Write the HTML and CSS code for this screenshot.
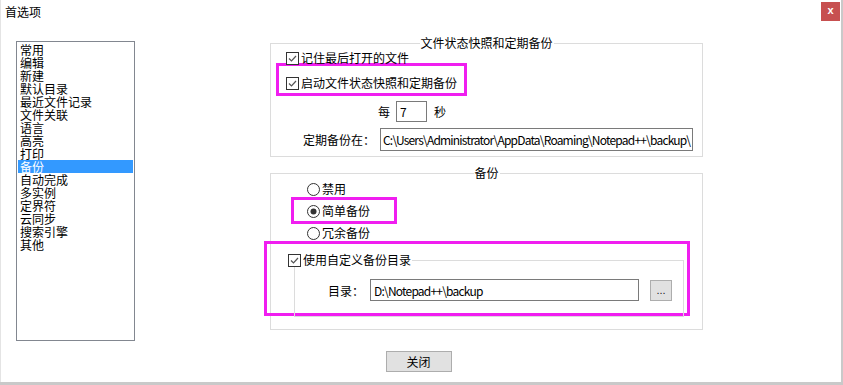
FILE: index.html
```html
<!DOCTYPE html>
<html lang="zh-CN">
<head>
    <meta charset="UTF-8">
    <title>首选项</title>
    <link rel="stylesheet" href="styles.css">
</head>
<body>

<div class="window">

    <!-- Title bar -->
    <div class="titlebar">
        <span class="title">首选项</span>
        <span class="close">x</span>
    </div>

    <div class="main">

        <!-- Category list -->
        <ul class="nav">
            <li>常用</li>
            <li>编辑</li>
            <li>新建</li>
            <li>默认目录</li>
            <li>最近文件记录</li>
            <li>文件关联</li>
            <li>语言</li>
            <li>高亮</li>
            <li>打印</li>
            <li class="selected">备份</li>
            <li>自动完成</li>
            <li>多实例</li>
            <li>定界符</li>
            <li>云同步</li>
            <li>搜索引擎</li>
            <li>其他</li>
        </ul>

        <div class="panel">

            <!-- Snapshot group -->
            <div class="group snapshot">
                <span class="group-title">文件状态快照和定期备份</span>
                <div class="check remember">
                    <svg class="box" width="13" height="13" viewBox="0 0 13 13"><rect x="0.5" y="0.5" width="12" height="12" fill="#fff" stroke="#333"/><path d="M3 6.5l2.5 2.5 4.5-5" fill="none" stroke="#555" stroke-width="1.2"/></svg>
                    <span>记住最后打开的文件</span>
                </div>
                <div class="mark mark-snapshot">
                    <div class="check">
                        <svg class="box" width="13" height="13" viewBox="0 0 13 13"><rect x="0.5" y="0.5" width="12" height="12" fill="#fff" stroke="#333"/><path d="M3 6.5l2.5 2.5 4.5-5" fill="none" stroke="#555" stroke-width="1.2"/></svg>
                        <span>启动文件状态快照和定期备份</span>
                    </div>
                </div>
                <div class="interval">
                    <span>每</span>
                    <input type="text" class="field seconds" value="7">
                    <span>秒</span>
                </div>
                <div class="path-row">
                    <span class="path-label">定期备份在：</span>
                    <input type="text" class="field path" value="C:\Users\Administrator\AppData\Roaming\Notepad++\backup\">
                </div>
            </div>

            <!-- Backup group -->
            <div class="group backup">
                <span class="group-title">备份</span>
                <div class="radio first">
                    <svg width="13" height="13" viewBox="0 0 13 13"><circle cx="6.5" cy="6.5" r="6" fill="#fff" stroke="#333"/></svg>
                    <span>禁用</span>
                </div>
                <div class="mark mark-simple">
                    <div class="radio">
                        <svg width="13" height="13" viewBox="0 0 13 13"><circle cx="6.5" cy="6.5" r="6" fill="#fff" stroke="#333"/><circle cx="6.5" cy="6.5" r="3" fill="#333"/></svg>
                        <span>简单备份</span>
                    </div>
                </div>
                <div class="radio verbose">
                    <svg width="13" height="13" viewBox="0 0 13 13"><circle cx="6.5" cy="6.5" r="6" fill="#fff" stroke="#333"/></svg>
                    <span>冗余备份</span>
                </div>
                <div class="mark mark-custom">
                    <div class="group custom">
                        <div class="check custom-title">
                            <svg class="box" width="13" height="13" viewBox="0 0 13 13"><rect x="0.5" y="0.5" width="12" height="12" fill="#fff" stroke="#333"/><path d="M3 6.5l2.5 2.5 4.5-5" fill="none" stroke="#555" stroke-width="1.2"/></svg>
                            <span>使用自定义备份目录</span>
                        </div>
                        <div class="dir-row">
                            <span class="dir-label">目录：</span>
                            <input type="text" class="field dir" value="D:\Notepad++\backup">
                            <button class="browse">...</button>
                        </div>
                    </div>
                </div>
            </div>

        </div>
    </div>

    <div class="footer">
        <button class="btn-close">关闭</button>
    </div>
</div>

</body>
</html>
```

FILE: styles.css
```css
body {
    margin: 0;
    background-color: #c9c9c9;
    font-family: "Noto Sans CJK SC", "Noto Sans", sans-serif;
    font-size: 12px;
    color: #000;
}

.window {
    width: 841px;
    height: 382px;
    background: #fff;
    border-left: 1px solid #e4e4e4;
    box-sizing: border-box;
}

/* title bar */
.titlebar {
    display: flex;
    justify-content: space-between;
    align-items: flex-start;
    height: 24px;
}

.title {
    padding: 4px 0 0 4px;
    font-size: 12px;
    line-height: 16px;
}

.close {
    width: 19px;
    height: 19px;
    margin: 2px 1px 0 0;
    background: #c75050;
    color: #fff;
    font-family: "Liberation Sans", sans-serif;
    font-weight: bold;
    font-size: 11px;
    line-height: 17px;
    text-align: center;
}

.main {
    display: flex;
    align-items: flex-start;
}

/* category list */
.nav {
    list-style: none;
    margin: 17px 0 0 15px;
    padding: 1px;
    width: 119px;
    height: 300px;
    box-sizing: border-box;
    border: 1px solid #828790;
}

.nav li {
    padding-left: 2px;
    height: 13px;
    line-height: 13px;
    white-space: nowrap;
}

.nav li.selected {
    background: #3399ff;
    color: #fff;
}

.panel {
    margin: 19px 0 0 135px;
    width: 433px;
}

/* group boxes */
.group {
    position: relative;
    border: 1px solid #dcdcdc;
}

.group-title {
    position: absolute;
    top: -9px;
    left: 50%;
    transform: translateX(-50%);
    padding: 0 1px;
    background: #fff;
    line-height: 16px;
    white-space: nowrap;
}

.snapshot {
    padding-bottom: 5px;
}

.backup {
    margin-top: 16px;
    padding-bottom: 13px;
}

.check,
.radio {
    display: flex;
    align-items: center;
    gap: 2px;
    height: 14px;
    line-height: 14px;
    white-space: nowrap;
}

.check svg,
.radio svg {
    flex: none;
}

.remember {
    margin: 7px 0 0 15px;
}

/* magenta annotation frames */
.mark {
    border: 3px solid #f01ef0;
    box-sizing: border-box;
}

.mark-snapshot {
    margin: -2px 0 0 5px;
    width: 191px;
    padding: 10px 0 3px 7px;
}

.interval {
    display: flex;
    align-items: center;
    margin: 5px 0 0 107px;
    height: 21px;
}

.field {
    box-sizing: border-box;
    border: 1px solid #7a7a7a;
    background: #fff;
    font-family: "Noto Sans CJK SC", "Noto Sans", sans-serif;
    font-size: 12px;
    color: #000;
    padding: 0 0 0 3px;
    margin: 0;
    outline: none;
}

.seconds {
    width: 31px;
    height: 21px;
    margin: 0 7px 0 6px;
}

.path-row {
    display: flex;
    align-items: center;
    margin: 6px 0 0 32px;
    height: 23px;
}

.path-label {
    width: 77px;
}

.path {
    width: 313px;
    height: 23px;
    padding-left: 2px;
    letter-spacing: -0.8px;
}

.radio.first {
    margin: 8px 0 0 36px;
}

.mark-simple {
    margin: 1px 0 0 20px;
    width: 106px;
    padding: 4px 0 3px 13px;
}

.radio.verbose {
    margin: 2px 0 0 36px;
}

.mark-custom {
    margin: 1px 0 0 -7px;
    width: 426px;
    height: 75px;
}

.custom {
    margin: 16px 0 -4px 27px;
    width: 390px;
    height: 57px;
    box-sizing: border-box;
}

.custom-title {
    position: absolute;
    top: -8px;
    left: -7px;
    padding-right: 1px;
    background: #fff;
    gap: 2px;
}

.dir-row {
    display: flex;
    align-items: center;
    margin: 18px 0 0 33px;
    height: 22px;
}

.dir-label {
    width: 42px;
}

.dir {
    width: 269px;
    height: 22px;
    letter-spacing: -0.8px;
}

.browse {
    margin-left: 11px;
    width: 22px;
    height: 21px;
    padding: 0;
    border: 1px solid #adadad;
    background: #e1e1e1;
    font-family: "Liberation Sans", sans-serif;
    font-size: 11px;
    line-height: 15px;
    color: #222;
}

/* bottom button */
.footer {
    display: flex;
    justify-content: center;
    padding: 10px 5px 0 0;
}

.btn-close {
    width: 66px;
    height: 21px;
    padding: 0;
    border: 1px solid #adadad;
    background: #e1e1e1;
    font-family: "Noto Sans CJK SC", sans-serif;
    font-size: 12px;
    color: #000;
}
```
